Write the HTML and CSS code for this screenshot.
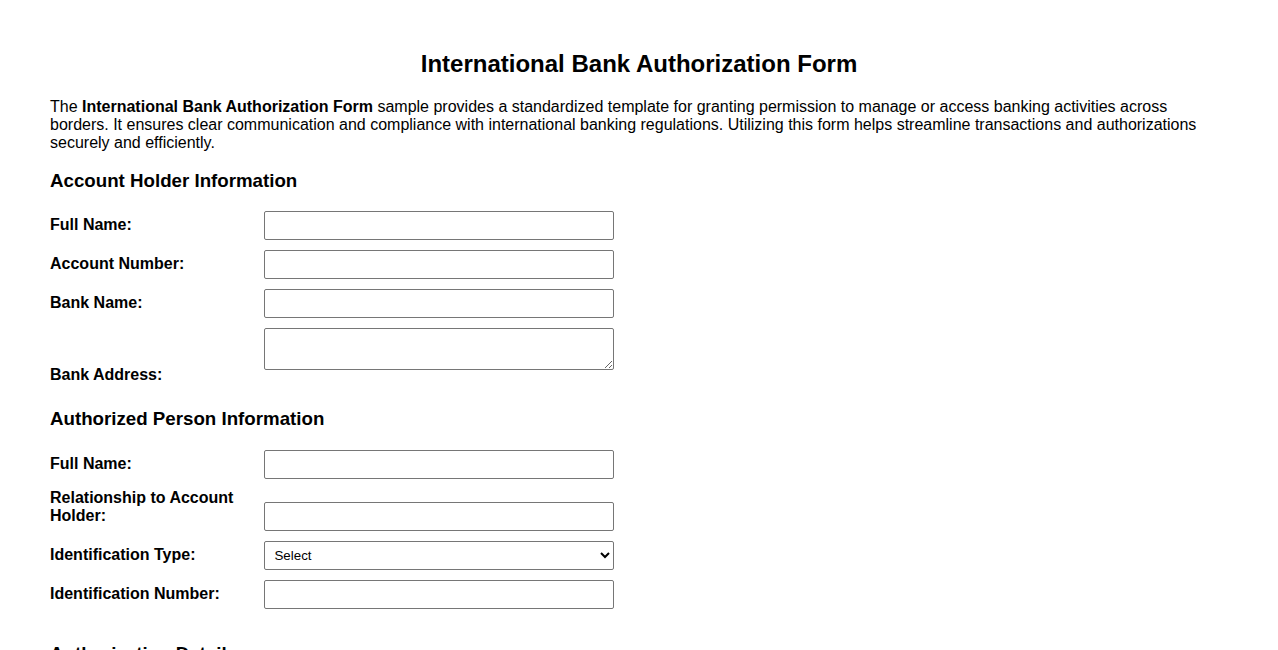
FILE: index.html
```html
<!DOCTYPE html>
<html lang="en">
<head>
    <meta charset="UTF-8">
    <meta name="viewport" content="width=device-width, initial-scale=1.0">
    <title>International Bank Authorization Form</title>
    <link rel="stylesheet" href="styles.css">
</head>
<body>
    <div class="page">
        <h1>International Bank Authorization Form</h1>

        <p class="intro">The <strong>International Bank Authorization Form</strong> sample provides a standardized template for granting permission to manage or access banking activities across borders. It ensures clear communication and compliance with international banking regulations. Utilizing this form helps streamline transactions and authorizations securely and efficiently.</p>

        <form>
            <div class="section">
                <h3>Account Holder Information</h3>
                <div class="field">
                    <label for="holderName">Full Name:</label>
                    <input type="text" id="holderName" name="holderName">
                </div>
                <div class="field">
                    <label for="accountNumber">Account Number:</label>
                    <input type="text" id="accountNumber" name="accountNumber">
                </div>
                <div class="field">
                    <label for="bankName">Bank Name:</label>
                    <input type="text" id="bankName" name="bankName">
                </div>
                <div class="field">
                    <label for="bankAddress">Bank Address:</label>
                    <textarea id="bankAddress" name="bankAddress" rows="2"></textarea>
                </div>
            </div>

            <div class="section">
                <h3>Authorized Person Information</h3>
                <div class="field">
                    <label for="personName">Full Name:</label>
                    <input type="text" id="personName" name="personName">
                </div>
                <div class="field">
                    <label for="relationship">Relationship to Account Holder:</label>
                    <input type="text" id="relationship" name="relationship">
                </div>
                <div class="field">
                    <label for="idType">Identification Type:</label>
                    <select id="idType" name="idType">
                        <option value="">Select</option>
                        <option value="passport">Passport</option>
                        <option value="national">National ID</option>
                        <option value="license">Driver's License</option>
                    </select>
                </div>
                <div class="field">
                    <label for="idNumber">Identification Number:</label>
                    <input type="text" id="idNumber" name="idNumber">
                </div>
            </div>

            <div class="section">
                <h3>Authorization Details</h3>
                <div class="field">
                    <label for="scope">Scope of Authority:</label>
                    <textarea id="scope" name="scope" rows="2"></textarea>
                </div>
                <div class="field">
                    <label for="startDate">Start Date:</label>
                    <input type="text" id="startDate" name="startDate">
                </div>
                <div class="field">
                    <label for="endDate">End Date:</label>
                    <input type="text" id="endDate" name="endDate">
                </div>
            </div>
        </form>
    </div>
</body>
</html>
```

FILE: styles.css
```css
body {
    margin: 0;
    font-family: "Liberation Sans", Arial, sans-serif;
    font-size: 16px;
    color: #000;
    background: #fff;
}

.page {
    padding: 20px 50px;
}

h1 {
    margin: 30px 0 20px;
    font-size: 24px;
    text-align: center;
}

.intro {
    margin: 0;
}

.section {
    margin-top: 18px;
}

.section + .section {
    margin-top: 24px;
}

.section h3 {
    margin: 0 0 20px;
    font-size: 18.72px;
}

.section:first-child h3 {
    margin-bottom: 19px;
}

.field label {
    display: inline-block;
    width: 200px;
    margin-right: 10px;
    font-weight: bold;
}

.field input,
.field select,
.field textarea {
    width: 350px;
    margin: 0 0 10px;
    padding: 5px;
    border: 1px solid #767676;
    border-radius: 2px;
    box-sizing: border-box;
    background: #fff;
    font-family: "Liberation Sans", Arial, sans-serif;
    font-size: 13.33px;
}

.field input,
.field select {
    height: 29px;
}

.field textarea {
    height: 42px;
}
```
